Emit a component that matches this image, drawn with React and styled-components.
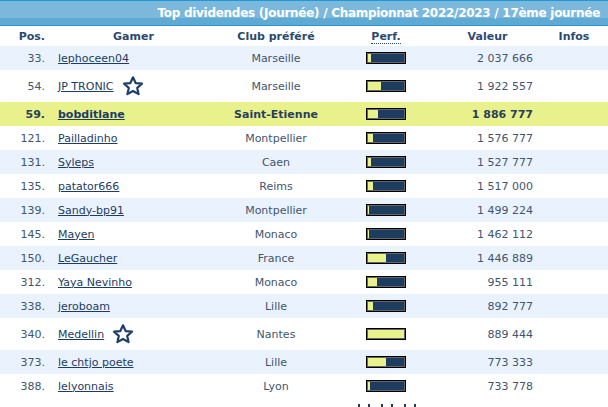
import React from "react";
import styled, { createGlobalStyle } from "styled-components";

const GlobalStyle = createGlobalStyle`
  body {
    margin: 0;
    background: #ffffff;
    font-family: "DejaVu Sans", Verdana, sans-serif;
  }
`;

const rows = [
  { pos: 33, name: "lephoceen04", club: "Marseille", perf: 3, value: "2 037 666" },
  { pos: 54, name: "JP TRONIC", club: "Marseille", perf: 13, value: "1 922 557", star: true },
  { pos: 59, name: "bobditlane", club: "Saint-Etienne", perf: 10, value: "1 886 777", me: true },
  { pos: 121, name: "Pailladinho", club: "Montpellier", perf: 5, value: "1 576 777" },
  { pos: 131, name: "Syleps", club: "Caen", perf: 3, value: "1 527 777" },
  { pos: 135, name: "patator666", club: "Reims", perf: 5, value: "1 517 000" },
  { pos: 139, name: "Sandy-bp91", club: "Montpellier", perf: 1, value: "1 499 224" },
  { pos: 145, name: "Mayen", club: "Monaco", perf: 1, value: "1 462 112" },
  { pos: 150, name: "LeGaucher", club: "France", perf: 18, value: "1 446 889" },
  { pos: 312, name: "Yaya Nevinho", club: "Monaco", perf: 9, value: "955 111" },
  { pos: 338, name: "jeroboam", club: "Lille", perf: 5, value: "892 777" },
  { pos: 340, name: "Medellin", club: "Nantes", perf: 36, value: "889 444", star: true },
  { pos: 373, name: "le chtjo poete", club: "Lille", perf: 18, value: "773 333" },
  { pos: 388, name: "lelyonnais", club: "Lyon", perf: 2, value: "733 778" },
];

const Page = styled.div`
  width: 608px;
  overflow: hidden;
`;

const TitleBar = styled.div`
  height: 24px;
  border-top: 1px solid #1f9ad6;
  border-bottom: 1px solid #1f9ad6;
  background: linear-gradient(to bottom, #7bb8dc 0, #7bb8dc 17px, #5fa9d3 17px, #5fa9d3 100%);
  color: #ffffff;
  font-weight: bold;
  font-size: 12px;
  letter-spacing: -0.28px;
  display: flex;
  align-items: center;
  justify-content: flex-end;
  padding-right: 8px;
`;

const Table = styled.table`
  width: 608px;
  border-collapse: collapse;
  table-layout: fixed;
  font-size: 11px;
`;

const Th = styled.th`
  height: 20px;
  padding: 0;
  font-weight: bold;
  color: #2b4a6f;
  text-align: ${(p) => p.$align || "center"};
  padding-right: ${(p) => (p.$align === "right" ? "7px" : "0")};
`;

const Abbr = styled.span`
  border-bottom: 1px dotted #2b4a6f;
`;

const Row = styled.tr`
  background: ${(p) => (p.$me ? "#e8f18c" : p.$alt ? "#eaf3fd" : "#ffffff")};
  color: ${(p) => (p.$me ? "#2a3f5a" : "#41556f")};
  font-weight: ${(p) => (p.$me ? "bold" : "normal")};
`;

const Td = styled.td`
  height: ${(p) => (p.$tall ? "32px" : "24px")};
  padding: 0;
  text-align: ${(p) => p.$align || "center"};
  padding-right: ${(p) => (p.$align === "right" ? "7px" : "0")};
  padding-left: ${(p) => (p.$align === "left" ? "6px" : "0")};
  white-space: nowrap;
`;

const NameCell = styled.div`
  display: flex;
  align-items: center;
  gap: 8px;
`;

const Name = styled.a`
  color: #1c3c64;
  text-decoration: underline;
  cursor: pointer;
`;

const Bar = styled.div`
  display: inline-flex;
  width: 36px;
  height: 8px;
  border: 1px solid #000000;
  outline: 1px solid #666666;
  outline-offset: -2px;
  background: #1d3d60;
  vertical-align: middle;
  padding: 1px;
  box-sizing: content-box;
  margin-top: -1px;
`;

const Fill = styled.div`
  height: 100%;
  background: #e8f18c;
`;

const Pager = styled.div`
  display: flex;
  padding-top: 6px;
  padding-left: 358px;
  height: 4px;
`;

const Dot = styled.span`
  width: 2px;
  height: 3px;
  background: #1c3c64;
  margin-right: 8px;
  &:nth-child(even) {
    margin-right: 11px;
  }
`;

const Star = () => (
  <svg width="22" height="22" viewBox="0 0 24 24" fill="none" stroke="#1f3f6a" strokeWidth="2.4" strokeLinejoin="round">
    <path d="M12 2.5l2.9 6.3 6.9.7-5.2 4.6 1.5 6.8L12 17.4l-6.1 3.5 1.5-6.8-5.2-4.6 6.9-.7z" />
  </svg>
);

export default function App() {
  return (
    <Page>
      <GlobalStyle />
      <TitleBar>Top dividendes (Journée) / Championnat 2022/2023 / 17ème journée</TitleBar>
      <Table>
        <colgroup>
          <col style={{ width: 52 }} />
          <col style={{ width: 163 }} />
          <col style={{ width: 122 }} />
          <col style={{ width: 98 }} />
          <col style={{ width: 105 }} />
          <col style={{ width: 68 }} />
        </colgroup>
        <thead>
          <tr>
            <Th $align="right">Pos.</Th>
            <Th>Gamer</Th>
            <Th>Club préféré</Th>
            <Th>
              <Abbr>Perf.</Abbr>
            </Th>
            <Th>Valeur</Th>
            <Th>Infos</Th>
          </tr>
        </thead>
        <tbody>
          {rows.map((r, i) => (
            <Row key={r.pos} $alt={i % 2 === 0} $me={r.me}>
              <Td $align="right" $tall={r.star}>{r.pos}.</Td>
              <Td $align="left">
                <NameCell>
                  <Name>{r.name}</Name>
                  {r.star && <Star />}
                </NameCell>
              </Td>
              <Td>{r.club}</Td>
              <Td>
                <Bar>
                  <Fill style={{ width: r.perf }} />
                </Bar>
              </Td>
              <Td $align="right">{r.value}</Td>
              <Td />
            </Row>
          ))}
        </tbody>
      </Table>
      <Pager>
        <Dot />
        <Dot />
        <Dot />
        <Dot />
        <Dot />
        <Dot />
      </Pager>
    </Page>
  );
}
